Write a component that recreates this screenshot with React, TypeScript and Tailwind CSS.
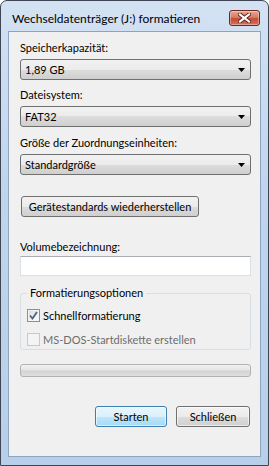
import * as React from "react";

const FONT = { fontFamily: 'Lato, "Noto Sans", sans-serif' };

/** Win7 combobox — grey glass face, black caret on the right. */
function Combo({ value }: { value: string }) {
  return (
    <div className="flex h-[21px] items-center justify-between rounded-[3px] border border-[#707070] bg-[linear-gradient(#f2f2f2_0%,#ebebeb_50%,#dddddd_50%,#cfcfcf_100%)] pr-[5px] pl-[4px] text-[11px] leading-none text-black">
      <span className="whitespace-nowrap">{value}</span>
      <svg width="7" height="4" viewBox="0 0 7 4" aria-hidden>
        <polygon points="0,0 7,0 3.5,4" fill="#000" />
      </svg>
    </div>
  );
}

function Label({ children }: { children: React.ReactNode }) {
  return <div className="h-[16px] whitespace-nowrap text-[11px] leading-[16px] text-black">{children}</div>;
}

export default function App() {
  return (
    <div style={FONT} className="h-[466px] w-[269px] bg-white">
      <div className="flex h-[466px] w-[269px] flex-col rounded-t-[7px] border border-[#3d4652] bg-[linear-gradient(#d3e2f3_0%,#c0d5ed_40%,#b8cfe9_100%)] px-[7px] pb-[8px]">
        {/* Title bar */}
        <div className="flex h-[30px] shrink-0 items-start justify-between">
          <span className="mt-[10px] pl-[4px] whitespace-nowrap text-[12px] leading-[16px] text-black">
            Wechseldatenträger (J:) formatieren
          </span>
          <div className="mt-[9px] mr-[1px] flex h-[16px] w-[31px] items-center justify-center rounded-[3px] border border-[#6b2a22] bg-[linear-gradient(#e9a592_0%,#d57d68_45%,#c54a32_55%,#d8735a_100%)] shadow-[inset_0_0_0_1px_rgba(255,255,255,0.35)]">
            <svg width="13" height="10" viewBox="0 0 13 10" aria-hidden>
              <path d="M2 1.5 L11 8.5 M11 1.5 L2 8.5" stroke="#5a2218" strokeWidth="4" strokeLinecap="square" />
              <path d="M2 1.5 L11 8.5 M11 1.5 L2 8.5" stroke="#fff" strokeWidth="2.2" strokeLinecap="square" />
            </svg>
          </div>
        </div>

        {/* Client area */}
        <div className="flex flex-1 flex-col border border-[#8ea3bd] bg-[#f0f0f0] pr-[9px] pl-[11px]">
          <div className="mt-[8px]">
            <Label>Speicherkapazität:</Label>
          </div>
          <div className="mt-[3px]">
            <Combo value="1,89 GB" />
          </div>

          <div className="mt-[7px]">
            <Label>Dateisystem:</Label>
          </div>
          <div className="mt-[3px]">
            <Combo value="FAT32" />
          </div>

          <div className="mt-[8px]">
            <Label>Größe der Zuordnungseinheiten:</Label>
          </div>
          <div className="mt-[3px]">
            <Combo value="Standardgröße" />
          </div>

          <div className="mt-[21px] flex">
            <button className="ml-[1px] flex h-[21px] w-[178px] items-center justify-center rounded-[3px] border border-[#707070] bg-[linear-gradient(#f2f2f2_0%,#ebebeb_50%,#dddddd_50%,#cfcfcf_100%)] whitespace-nowrap text-[11px] leading-none text-black">
              Gerätestandards wiederherstellen
            </button>
          </div>

          <div className="mt-[22px]">
            <Label>Volumebezeichnung:</Label>
          </div>
          <div className="mt-[1px] h-[20px] border border-[#dbdfe6] border-t-[#abadb3] bg-white" />

          {/* Formatting options group */}
          <fieldset className="mt-[9px] rounded-[3px] border border-[#d5dfe5] pr-[6px] pb-[3px] pl-[6px]">
            <legend className="h-[16px] px-[3px] text-[11px] leading-[16px] text-black">
              Formatierungsoptionen
            </legend>
            <div className="mt-[7px] flex h-[14px] items-center gap-[3px]">
              <span className="flex h-[13px] w-[13px] shrink-0 items-center justify-center border border-[#8e8f8f] bg-white">
                <span className="flex h-[11px] w-[11px] items-center justify-center border border-[#f4f4f4] bg-[linear-gradient(135deg,#dcdcdc,#fdfdfd)]">
                  <svg width="9" height="9" viewBox="0 0 9 9" aria-hidden>
                    <path d="M1 4.5 L3.5 7.5 L8 1" fill="none" stroke="#4d6185" strokeWidth="1.8" />
                  </svg>
                </span>
              </span>
              <span className="text-[11px] leading-none text-black">Schnellformatierung</span>
            </div>
            <div className="mt-[10px] flex h-[14px] items-center gap-[3px]">
              <span className="h-[13px] w-[13px] shrink-0 border border-[#c7c8c9] bg-[#f4f4f4]" />
              <span className="whitespace-nowrap text-[11px] leading-none text-[#6d6d6d]">MS-DOS-Startdiskette erstellen</span>
            </div>
          </fieldset>

          {/* Progress bar */}
          <div className="mt-[14px] h-[13px] rounded-[3px] border border-[#b2b2b2] bg-[linear-gradient(#f3f3f3_0%,#e4e4e4_45%,#d4d4d4_55%,#dedede_100%)]" />

          {/* Action buttons */}
          <div className="mt-[29px] flex justify-end gap-[9px] pr-[1px]">
            <button className="flex h-[21px] w-[72px] items-center justify-center rounded-[3px] border border-[#3c7fb1] bg-[linear-gradient(#eaf6fd_0%,#d9f0fc_50%,#bee6fd_50%,#a7d9f5_100%)] text-[11px] leading-none text-black shadow-[inset_0_0_0_1px_rgba(255,255,255,0.6)]">
              Starten
            </button>
            <button className="flex h-[21px] w-[74px] items-center justify-center rounded-[3px] border border-[#707070] bg-[linear-gradient(#f2f2f2_0%,#ebebeb_50%,#dddddd_50%,#cfcfcf_100%)] text-[11px] leading-none text-black shadow-[inset_0_0_0_1px_rgba(255,255,255,0.6)]">
              Schließen
            </button>
          </div>
        </div>
      </div>
    </div>
  );
}
